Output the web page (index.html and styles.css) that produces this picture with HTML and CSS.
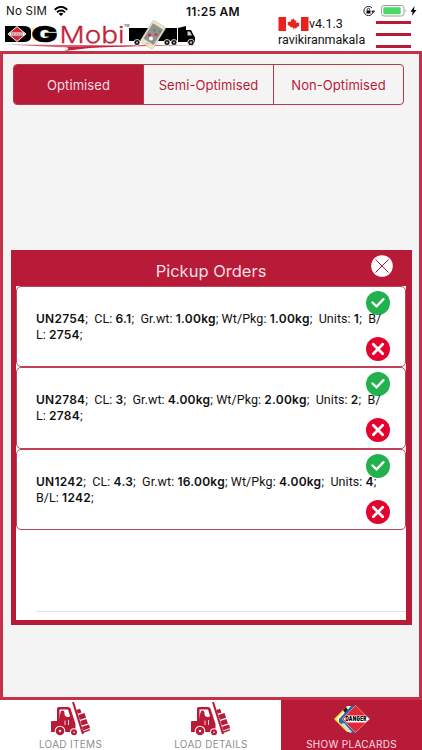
FILE: index.html
```html
<!DOCTYPE html>
<html lang="en">
<head>
<meta charset="utf-8">
<title>DG Mobi</title>
<link rel="stylesheet" href="styles.css">
</head>
<body>
<svg width="0" height="0" class="defs" aria-hidden="true">
  <symbol id="forklift" viewBox="0 0 40 34">
    <path fill="#b81b38" d="M0 20q0-1 1-1H6V6.500Q6 5 8 5H17Q19 5 19.500 6.500L24.500 22V30H0Z"/>
    <path fill="#fff" d="M8.500 7.500H17L19 14 17.500 15.500 14 14 13 10 10.500 9.500 9 12 8.500 18Z"/>
    <circle cx="11.500" cy="10.500" r="1.900" fill="#b81b38"/>
    <path fill="#b81b38" d="M9.500 13.500 12 12.500 14 15.500 18 15V16.500L13.500 17.500 17 20 16 23H9Z"/>
    <path stroke="#fff" stroke-width=".8" d="M14 23V18.500M17.500 18V23"/>
    <path stroke="#fff" stroke-width="3.400" fill="none" d="M22 0 32 32"/>
    <path stroke="#b81b38" stroke-width="2" fill="none" d="M22 0 32 32"/>
    <path fill="#b81b38" d="m25.500 8 3.500-1.200 1.500 3.700-3.700 1.200ZM27.300 13l6.200-2 1.600 4.800-6.200 2ZM29.300 19l6-2 1.700 4.500-6.200 2ZM31 24.700l7-2.300 1 3.600L32 28.500ZM31.500 29.500l7.500-2.500v1.500L32 31Z"/>
    <circle cx="9" cy="29" r="5.300" fill="#fff"/><circle cx="9" cy="29" r="4.300" fill="#b81b38"/><circle cx="9" cy="29" r="1.200" fill="#fff"/>
    <circle cx="23" cy="30.300" r="4" fill="#fff"/><circle cx="23" cy="30.300" r="3" fill="#b81b38"/><circle cx="23" cy="30.300" r=".8" fill="#fff"/>
  </symbol>
  <symbol id="accept" viewBox="0 0 24 24">
    <circle cx="12" cy="12" r="12" fill="#22b14c"/><path d="m6.500 11.500 4 3.800 7-7.200" fill="none" stroke="#fff" stroke-width="2.300" stroke-linecap="round"/>
  </symbol>
  <symbol id="reject" viewBox="0 0 24 24">
    <circle cx="12" cy="12" r="12" fill="#e4032e"/><path d="m7.300 7.300 9.400 9.400m0-9.400-9.400 9.400" stroke="#fff" stroke-width="2.700" stroke-linecap="round"/>
  </symbol>
</svg>
<header class="header">
  <div class="status">
    <span class="carrier">No SIM</span>
    <svg class="wifi" viewBox="0 0 14 10" width="14" height="10"><g fill="none" stroke="#000" stroke-width="1.900"><path d="M.7 3.700Q7-2 13.300 3.700M3 6.200Q7 2.800 11 6.200"/></g><path d="M4.600 7.800Q7 5.900 9.400 7.800L7 10Z"/></svg>
    <span class="clock">11:25 AM</span>
    <svg class="battery" viewBox="0 0 54 12" width="54" height="12">
      <circle cx="5.500" cy="6" r="4.600" fill="none" stroke="#222" stroke-width="1" stroke-dasharray="25 4"/><path d="M3.500 5.500h4v3h-4z"/><path d="M4.300 5.500V4.500a1.200 1.200 0 0 1 2.400 0v1M8.800 6h2.700l-1.400 1.800Z" fill="none" stroke="#000" stroke-width=".8"/>
      <rect x="18.500" y=".5" width="22.500" height="10.500" rx="2.500" fill="#fff" stroke="#888" stroke-width=".8"/><rect x="20.300" y="2.200" width="17.400" height="7.100" rx="1" fill="#4cd964"/><path d="M42.500 4.300q1.500 1.700 0 3.400Z" fill="#888"/>
      <path d="m51.500 1-4 5.700h2.200L48.800 11l4.700-6h-2.500Z"/>
    </svg>
  </div>
  <div class="brand">
    <svg class="logo" viewBox="0 0 200 32" width="200" height="32" role="img" aria-label="DG Mobi">
      <path d="M61 26.500Q130 24.500 199 25Q130 26 90 28L64 31Q74 27.500 61 26.500Z" fill="#c8203c"/>
      <path d="M5 24.500 120 25.200 61 27.300Z" fill="#d26476"/>
      <path d="M5 6H23Q31 6 31 11V17Q31 22 23 22H5Z"/>
      <path d="m17 6 9.500 8-9.500 8L7.500 14Z" fill="#fff"/><path d="m17 7 8.200 7-8.200 7L8.800 14Z" fill="#dc2638"/><path d="M9.500 12.500h15v3h-15z" fill="#fff"/><path d="M11 14h12" stroke="#444" stroke-width="1.200" stroke-dasharray="1.300 .4"/>
      <text x="31.500" y="22" class="logo-g" textLength="26" lengthAdjust="spacingAndGlyphs">G</text>
      <text x="59.500" y="22.800" class="logo-mobi" textLength="65" lengthAdjust="spacingAndGlyphs">Mobi</text>
      <text x="124" y="6.500" class="logo-tm">TM</text>
      <path d="M129 8h48v13h-48zM178 8l8-2v4h5l3 6 1 1v5h-17z"/>
      <path d="m187.500 11.500 2.500 0 2 4h-4.500z" fill="#ccc"/>
      <g fill="#111" stroke="#fff" stroke-width=".8"><circle cx="137" cy="22.500" r="3"/><circle cx="167" cy="22.500" r="3"/><circle cx="174" cy="22.500" r="3"/><circle cx="191" cy="22.500" r="3.300"/></g>
      <g fill="#bbb"><circle cx="137" cy="22.500" r="1"/><circle cx="167" cy="22.500" r="1"/><circle cx="174" cy="22.500" r="1"/><circle cx="191" cy="22.500" r="1.200"/></g>
      <g transform="rotate(32 153 14.500)"><rect x="145.500" y="2" width="15" height="25.500" rx="2" fill="#ece5c8" stroke="#b9b398" stroke-width=".5"/><path d="M147 5h12v18h-12z" fill="#929494"/><circle cx="153" cy="25.200" r=".9" fill="#aaa"/></g>
      <circle cx="149.500" cy="15" r="1.600" fill="#cf2940"/><circle cx="156" cy="14.500" r="1.600" fill="#dd3544"/><circle cx="160" cy="11.500" r="1.300" fill="#4e9c55"/><circle cx="151" cy="18.500" r="2" fill="#fff"/><circle cx="154.500" cy="10.500" r="1.300" fill="#767676"/>
    </svg>
    <div class="account">
      <div class="version"><svg viewBox="0 0 30 14" width="31" height="14"><path d="M0 0h7.500v14H0zM22.500 0H30v14h-7.500z" fill="#e9221f"/><path fill="#e9221f" d="m15 1.500 1.500 2.300 1.300-.5-.5 3 1.700-1.400.4 1h1.600l-.5 2 .6.500-3.300 2.300.2.800-2.700-.3V12.500h-.6v-2.300l-2.700.3.200-.8L8.900 7.400l.6-.5-.5-2h1.600l.4-1 1.700 1.400-.5-3 1.300.5Z"/></svg><span>v4.1.3</span></div>
      <div class="user">ravikiranmakala</div>
    </div>
    <div class="menu"><i></i><i></i><i></i></div>
  </div>
</header>
<main class="content">
  <nav class="segments"><span class="segment active">Optimised</span><span class="segment">Semi-Optimised</span><span class="segment">Non-Optimised</span></nav>
  <section class="panel">
    <h1 class="panel-head"><span>Pickup Orders</span><svg class="close" viewBox="0 0 22 22" width="22" height="22"><circle cx="11" cy="11" r="10.800" fill="#fff"/><path d="m4.500 4.500 13 13m0-13-13 13" stroke="#b81b38" stroke-width="1"/></svg></h1>
    <div class="orders">
      <article class="order">
        <p class="desc"><span class="line"><b>UN2754</b>;  CL: <b>6.1</b>;  Gr.wt: <b>1.00kg</b>; Wt/Pkg: <b>1.00kg</b>;  Units: <b>1</b>;  B/</span><span class="line">L: <b>2754</b>;</span></p>
        <div class="actions"><svg><use href="#accept"/></svg><svg><use href="#reject"/></svg></div>
      </article>
      <article class="order">
        <p class="desc"><span class="line"><b>UN2784</b>;  CL: <b>3</b>;  Gr.wt: <b>4.00kg</b>; Wt/Pkg: <b>2.00kg</b>;  Units: <b>2</b>;  B/</span><span class="line">L: <b>2784</b>;</span></p>
        <div class="actions"><svg><use href="#accept"/></svg><svg><use href="#reject"/></svg></div>
      </article>
      <article class="order">
        <p class="desc"><span class="line"><b>UN1242</b>;  CL: <b>4.3</b>;  Gr.wt: <b>16.00kg</b>; Wt/Pkg: <b>4.00kg</b>;  Units: <b>4</b>;</span><span class="line">B/L: <b>1242</b>;</span></p>
        <div class="actions"><svg><use href="#accept"/></svg><svg><use href="#reject"/></svg></div>
      </article>
      <div class="empty-row"></div>
    </div>
  </section>
</main>
<footer class="tabs">
  <div class="tab"><svg width="40" height="34"><use href="#forklift"/></svg><span>LOAD ITEMS</span></div>
  <div class="tab"><svg width="40" height="34"><use href="#forklift"/></svg><span>LOAD DETAILS</span></div>
  <div class="tab selected"><svg width="38" height="34" viewBox="0 0 38 34">
    <path d="M1 17 14 4h4v26h-4Z" fill="#f4e34a"/><path d="M4 17 16 4h4v26h-4Z" fill="#fff"/><path d="M6 17 18 4h4v27h-4L6 20Z" fill="#2a66a8"/><path d="m10 8 3-3 2 3-3 3Z" fill="#222"/><path d="m8 22 3-1 8 9-2 1Z" fill="#ddd"/>
    <path d="M22.500 3.500 36.500 17l-14 13.500L9 17Z" fill="#e32735" stroke="#e4bcbc" stroke-width=".6"/><path d="M14 13.500h18.500l4 3.500-4 3.500H14L10.500 17Z" fill="#fff"/><text x="12.500" y="19.400" class="danger" textLength="21" lengthAdjust="spacingAndGlyphs">DANGER</text>
  </svg><span>SHOW PLACARDS</span></div>
</footer>
</body>
</html>
```
FILE: styles.css
```css
* { box-sizing: border-box; }
body { margin: 0; width: 422px; height: 750px; overflow: hidden; display: flex; flex-direction: column; background: #fff; color: #111; font-family: Inter, "Liberation Sans", sans-serif; }
.defs { position: absolute; }
svg { display: block; flex: none; }
.header { height: 51px; flex: none; }
.status { height: 20px; display: flex; align-items: center; padding: 2px 5px 0 6px; font-size: 12px; }
.carrier { width: 48px; letter-spacing: .25px; font-size: 11.5px; white-space: nowrap; }
.clock { margin-left: 118px; font-weight: 600; font-size: 12px; white-space: nowrap; letter-spacing: .25px; }
.battery { margin-left: auto; }
.brand { height: 31px; display: flex; }
.logo-g { font: 900 22px Inter, sans-serif; stroke: #000; stroke-width: .6px; }
.logo-mobi { font: 300 23px Inter, sans-serif; fill: #c51f3c; stroke: #c51f3c; stroke-width: .3px; }
.logo-tm { font: 3.5px Inter, sans-serif; }
.account { width: 98px; margin: -4px 0 0 78px; font-family: Roboto, sans-serif; font-size: 12.5px; line-height: 17px; }
.version { display: flex; align-items: center; height: 15px; }
.user { letter-spacing: -.03px; }
.menu { display: flex; flex-direction: column; justify-content: space-between; width: 35px; height: 27px; margin-top: 1px; }
.menu i { height: 3px; background: #b81b38; }
.content { height: 649px; flex: none; border: 3px solid #c6314a; background: #f4f4f4; padding: 10px 7px 0 8px; }
.segments { height: 41px; width: 391px; margin-left: 2px; display: flex; border: 1px solid #b9364b; border-radius: 4px; color: #b81b38; overflow: hidden; font-size: 13px; letter-spacing: .07px; }
.segment { flex: 1; display: flex; align-items: center; justify-content: center; }
.segment + .segment { border-left: 1px solid #b9364b; }
.segment.active { background: #b81b38; color: #fadde3; }
.panel { width: 401px; height: 375px; margin-top: 145px; background: #b81b38; padding: 0 6px 5px 5px; }
.panel-head { height: 36px; margin: 0; display: flex; align-items: center; justify-content: center; position: relative; color: #f9dfe4; font-size: 16.5px; font-weight: 400; padding-top: 6px; }
.close { position: absolute; right: 13px; top: 5px; }
.orders { height: 334px; background: #fff; }
.order { height: 81.3px; border: 1.5px solid #c04257; border-radius: 5px; display: flex; position: relative; background: #fff; }
.desc { margin: 24px 0 0 19px; font: 12.5px/16px Roboto, sans-serif; }
.desc b { font-family: Inter, sans-serif; font-weight: 600; font-size: 12px; letter-spacing: .25px; }
.line { display: block; white-space: pre; letter-spacing: .06px; }
.actions { position: absolute; right: 15px; top: 4px; display: flex; flex-direction: column; gap: 22px; }
.actions svg { width: 24px; height: 24px; }
.desc { position: relative; z-index: 1; }
.empty-row { height: 82px; margin-left: 20px; border-bottom: 1px solid #e3e1ec; }
.tabs { height: 50px; flex: none; display: grid; grid-template-columns: 141px 140px 141px; }
.tab { display: flex; flex-direction: column; align-items: center; padding-top: 2px; font-size: 10px; color: #8e8e93; letter-spacing: .3px; }
.tab span { margin-top: 3px; line-height: 11px; white-space: nowrap; }
.selected { background: #b81b38; color: #fadde3; }
.danger { font: 900 6.5px Inter, sans-serif; }
```
